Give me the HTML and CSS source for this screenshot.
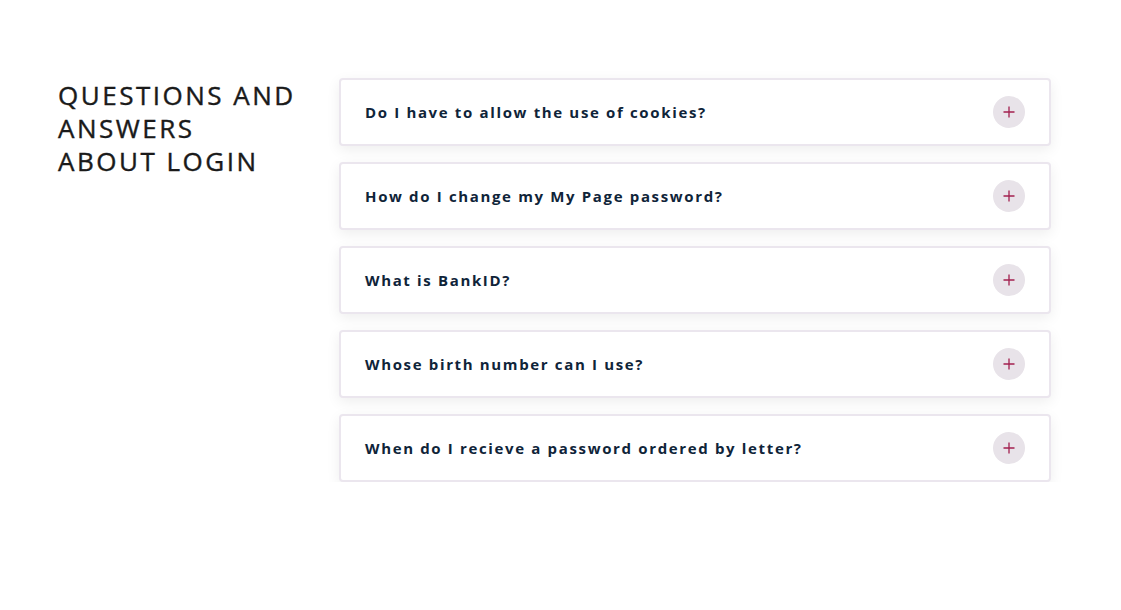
FILE: index.html
```html
<!DOCTYPE html>
<html lang="en">
<head>
<meta charset="utf-8">
<title>Questions and answers about login</title>
<link rel="stylesheet" href="styles.css">
</head>
<body>
<main class="faq">
  <h2 class="faq-title">Questions and answers about login</h2>
  <div class="faq-list">
    <div class="faq-item"><span class="faq-q">Do I have to allow the use of cookies?</span><span class="faq-toggle"><svg width="12" height="12" viewBox="0 0 12 12"><path d="M6 0.5V11.5M0.5 6H11.5" stroke="#a3204f" stroke-width="1.3" fill="none"/></svg></span></div>
    <div class="faq-item"><span class="faq-q">How do I change my My Page password?</span><span class="faq-toggle"><svg width="12" height="12" viewBox="0 0 12 12"><path d="M6 0.5V11.5M0.5 6H11.5" stroke="#a3204f" stroke-width="1.3" fill="none"/></svg></span></div>
    <div class="faq-item"><span class="faq-q">What is BankID?</span><span class="faq-toggle"><svg width="12" height="12" viewBox="0 0 12 12"><path d="M6 0.5V11.5M0.5 6H11.5" stroke="#a3204f" stroke-width="1.3" fill="none"/></svg></span></div>
    <div class="faq-item"><span class="faq-q">Whose birth number can I use?</span><span class="faq-toggle"><svg width="12" height="12" viewBox="0 0 12 12"><path d="M6 0.5V11.5M0.5 6H11.5" stroke="#a3204f" stroke-width="1.3" fill="none"/></svg></span></div>
    <div class="faq-item"><span class="faq-q">When do I recieve a password ordered by letter?</span><span class="faq-toggle"><svg width="12" height="12" viewBox="0 0 12 12"><path d="M6 0.5V11.5M0.5 6H11.5" stroke="#a3204f" stroke-width="1.3" fill="none"/></svg></span></div>
  </div>
</main>
</body>
</html>
```
FILE: styles.css
```css
html, body {
  margin: 0;
  padding: 0;
  background: #ffffff;
}
body {
  font-family: "Open Sans", "Noto Sans", sans-serif;
}
.faq {
  display: flex;
  align-items: flex-start;
  padding: 78px 0 0 58px;
}
.faq-title {
  flex: 0 0 244px;
  margin: 1px 37px 0 0;
  font-size: 26px;
  line-height: 33px;
  font-weight: 400;
  letter-spacing: 2.5px;
  text-transform: uppercase;
  color: #1a1a1a;
  -webkit-text-stroke: 0.4px #1a1a1a;
}
.faq-list {
  width: 712px;
  display: flex;
  flex-direction: column;
  gap: 16px;
}
.faq-item {
  box-sizing: border-box;
  height: 68px;
  display: flex;
  align-items: center;
  justify-content: space-between;
  padding: 0 24px 0 24px;
  background: #ffffff;
  border: 2px solid #ebe6ee;
  border-radius: 4px;
  box-shadow: 0 4px 14px rgba(0, 0, 0, 0.07);
}
.faq-q {
  font-size: 15px;
  font-weight: 700;
  letter-spacing: 1.65px;
  color: #0f2439;
}
.faq-toggle {
  width: 32px;
  height: 32px;
  border-radius: 50%;
  background: #e8e3e9;
  display: flex;
  align-items: center;
  justify-content: center;
}
```
